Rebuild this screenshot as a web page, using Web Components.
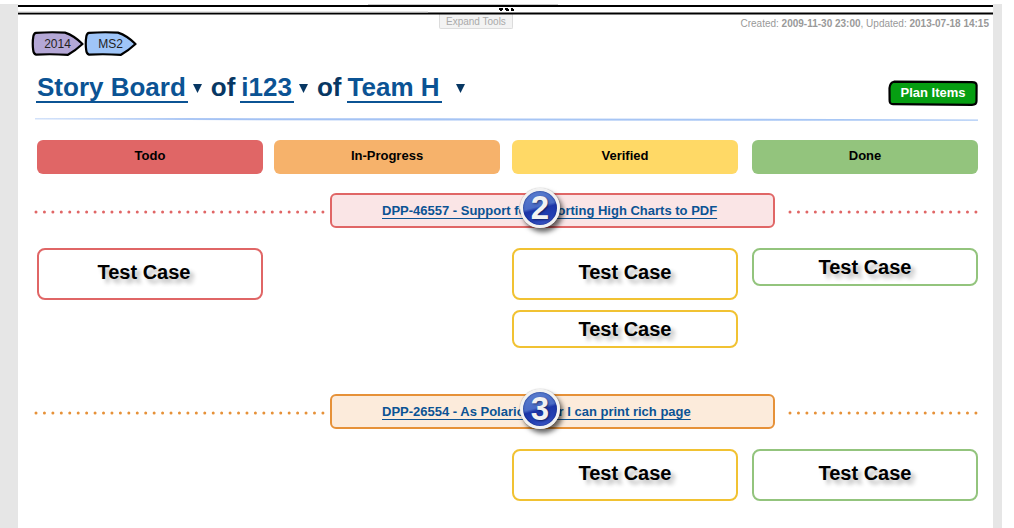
<!DOCTYPE html>
<html lang="en">
<head>
<meta charset="utf-8">
<title>Story Board</title>
<style>
  html, body { margin: 0; background: #fff; }
  body { font-family: "Liberation Sans", Arial, sans-serif; color: #000; }
</style>
</head>
<body>
<story-page>
  <top-rail slot="rail"></top-rail>
  <page-meta slot="rail" created="2009-11-30 23:00" updated="2013-07-18 14:15"></page-meta>
  <tag-chip slot="tags" style="--fill:#b4a7d6">2014</tag-chip>
  <tag-chip slot="tags" style="--fill:#9fc5f8">MS2</tag-chip>
  <board-title slot="title"></board-title>
  <plan-button slot="action">Plan Items</plan-button>
  <board-columns>
    <column-head style="--fill:#e06666">Todo</column-head>
    <column-head style="--fill:#f6b26b">In-Progress</column-head>
    <column-head style="--fill:#ffd966">Verified</column-head>
    <column-head style="--fill:#93c47d">Done</column-head>
  </board-columns>
  <story-lane step="2" label="DPP-46557 - Support for exporting High Charts to PDF" style="--line:#e06666;--tint:#fae5e6">
    <test-card slot="todo" tall>Test Case</test-card>
    <test-card slot="verified" tall>Test Case</test-card>
    <test-card slot="verified">Test Case</test-card>
    <test-card slot="done">Test Case</test-card>
  </story-lane>
  <story-lane step="3" label="DPP-26554 - As Polarion user I can print rich page" style="--line:#e69138;--tint:#fcebdb">
    <test-card slot="verified" tall>Test Case</test-card>
    <test-card slot="done" tall>Test Case</test-card>
  </story-lane>
</story-page>

<script>
const define = (name, markup, fill) => {
  const template = document.createElement('template');
  template.innerHTML = markup;
  customElements.define(name, class extends HTMLElement {
    constructor() {
      super();
      const root = this.attachShadow({ mode: 'open' });
      root.append(template.content.cloneNode(true));
      if (fill) fill(this, root);
    }
  });
};

define('story-page', `
<style>
  :host { display: block; padding: 4px 12px 0 0; --columns: 226fr 11fr 226fr 12fr 226fr 14fr 226fr; }
  .frame { box-sizing: border-box; min-height: calc(100vh - 4px); border: solid #e6e6e6; border-width: 0 9px 0 18px; }
  .tags { display: flex; padding: 0 0 0 13px; }
  .head { display: flex; justify-content: space-between; align-items: flex-start; padding: 16px 15px 0 18px; }
  .rule { display: block; width: calc(100% - 32px); height: 5px; margin: 11px 15px 0 17px; }
  main { display: flex; flex-direction: column; padding-top: 18px; }
  ::slotted(story-lane) { margin-bottom: 46px; }
  ::slotted(story-lane:last-child) { margin-bottom: 0; }
</style>
<div class="frame">
  <header>
    <slot name="rail"></slot>
    <div class="tags"><slot name="tags"></slot></div>
    <div class="head"><slot name="title"></slot><slot name="action"></slot></div>
    <svg class="rule" viewBox="0 0 942 5" preserveAspectRatio="none" aria-hidden="true">
      <defs><linearGradient id="g"><stop offset="0" stop-color="#d3e2fa"/><stop offset=".2" stop-color="#a4c2f4"/><stop offset="1" stop-color="#a9c8f5"/></linearGradient></defs>
      <path d="M0 1 L150 1.1 L400 1.3 L700 1.8 L942 2.4 L942 3.8 L700 3.8 L400 3.5 L150 3 L0 2.6Z" fill="url(#g)"/>
    </svg>
  </header>
  <main><slot></slot></main>
</div>`);

define('top-rail', `
<style>
  :host { display: block; position: relative; height: 11px; }
  .lines { display: block; width: 100%; height: 11px; }
  .grip { position: absolute; left: 50%; top: 4px; width: 17px; height: 4px; margin-left: -8px; }
</style>
<svg class="lines" viewBox="0 0 975 11" preserveAspectRatio="none" aria-hidden="true">
  <path d="M0 2h975M0 9.5h975" fill="none" stroke="#000" stroke-width="2"/>
  <path d="M0 8h410M350 .5h190" stroke="#ccc" stroke-width="1"/>
</svg>
<svg class="grip" viewBox="0 0 17 4" aria-hidden="true"><path d="M1 0h4v2h-1v1h-2v-1h-1zM7 0h3v1h1v2h-3v-1h-1zM13 0h2v1h1v2h-3z"/></svg>`);

define('page-meta', `
<style>
  :host { display: grid; grid-template-columns: 421fr 554fr; font-size: 10px; line-height: 14px; }
  .row { grid-column: 2; display: flex; justify-content: space-between; align-items: flex-start; margin-top: -1px; padding-right: 4px; }
  button { box-sizing: border-box; height: 15px; padding: 0 6px; border: 1px solid #dcdcdc; border-top: 0; border-radius: 0 0 2px 2px; background: #f3f3f3; color: #aaa; font: 10px/16px "Liberation Sans", Arial, sans-serif; }
  p { margin: 3px 0 0; color: #999; }
</style>
<div class="row">
  <button type="button">Expand Tools</button>
  <p>Created: <b id="c"></b>, Updated: <b id="u"></b></p>
</div>`, (host, root) => {
  root.getElementById('c').textContent = host.getAttribute('created');
  root.getElementById('u').textContent = host.getAttribute('updated');
});

define('tag-chip', `
<style>
  :host { display: block; position: relative; width: 53px; height: 26px; font-size: 12px; line-height: 26px; color: #222; text-align: center; }
  svg { position: absolute; inset: 0; width: 53px; height: 26px; }
  span { position: relative; }
</style>
<svg viewBox="0 0 53 26" aria-hidden="true"><path d="M5 1.8 Q20 .8 34 1.6 Q43 4.5 51.5 13 Q45 19 37 23.8 Q20 22.8 5 23.6 Q2.4 23 2.2 19 Q1.2 12 2.4 5 Q3 2 5 1.8Z" fill="var(--fill)" stroke="#000" stroke-width="2.2" stroke-linejoin="round"/></svg>
<span><slot></slot></span>`);

define('board-title', `
<style>
  :host { display: block; }
  h1 { display: flex; align-items: flex-start; margin: 0; font-size: 26px; line-height: 28px; font-weight: bold; color: #073763; white-space: pre; }
  a { padding: 0 2px 0 1px; border-bottom: 2px solid #0b5394; color: #0b5394; text-decoration: none; }
  span { margin: 0 5px 0 9px; }
  button { display: block; margin: 11px 0 0 5px; padding: 0; border: 0; background: none; }
  button.far { margin-left: 14px; }
  svg { display: block; width: 9px; height: 9px; }
</style>
<h1><a href="#board">Story Board</a><button type="button" aria-label="Choose page"><svg viewBox="0 0 9 9"><path d="M0 0h9L4.5 9z" fill="#073763"/></svg></button><span>of</span><a href="#iteration">i123</a><button type="button" aria-label="Choose iteration"><svg viewBox="0 0 9 9"><path d="M0 0h9L4.5 9z" fill="#073763"/></svg></button><span>of</span><a href="#team">Team H</a><button class="far" type="button" aria-label="Choose team"><svg viewBox="0 0 9 9"><path d="M0 0h9L4.5 9z" fill="#073763"/></svg></button></h1>`);

define('plan-button', `
<style>
  :host { display: block; margin-top: 7px; }
  button { position: relative; display: block; width: 90px; height: 26px; padding: 0; border: 0; background: none; color: #fff; font: bold 13px/24px "Liberation Sans", Arial, sans-serif; }
  svg { position: absolute; inset: 0; width: 90px; height: 26px; }
  span { position: relative; display: block; height: 26px; line-height: 25px; }
</style>
<button type="button"><svg viewBox="0 0 90 26" aria-hidden="true"><path d="M6 1.7 L84 2.2 Q88.5 2.2 88.6 5.4 L88.5 21 Q88.5 24.8 84 24.8 L5 24.2 Q1.4 24.2 1.6 20 L1.5 8 Q2 2.6 6 1.7Z" fill="#069e12" stroke="#000" stroke-width="2.2"/></svg><span><slot></slot></span></button>`);

define('board-columns', `
<style>
  :host { display: grid; grid-template-columns: var(--columns); padding: 0 15px 0 19px; margin-bottom: 19px; }
  ::slotted(:nth-child(1)) { grid-column: 1; }
  ::slotted(:nth-child(2)) { grid-column: 3; }
  ::slotted(:nth-child(3)) { grid-column: 5; }
  ::slotted(:nth-child(4)) { grid-column: 7; }
</style>
<slot></slot>`);

define('column-head', `
<style>
  :host { display: block; box-sizing: border-box; height: 34px; border-radius: 6px; background: var(--fill); font-size: 13px; line-height: 32px; font-weight: bold; text-align: center; }
</style>
<slot></slot>`);

define('story-lane', `
<style>
  :host { display: block; }
  .bar { display: grid; grid-template-columns: 287fr 467fr 186fr; align-items: center; padding: 0 17px 0 18px; }
  .dots { display: block; width: 100%; height: 4px; overflow: visible; }
  line { stroke: var(--line); stroke-width: 3px; stroke-linecap: round; stroke-dasharray: 0 1; }
  .story { position: relative; box-sizing: border-box; height: 35px; margin: 0 15px 0 7px; padding-left: 50px; border: 2px solid var(--line); border-radius: 6px; background: var(--tint); font-size: 13px; line-height: 31px; font-weight: bold; white-space: nowrap; }
  a { color: #0b5394; text-decoration: underline; text-decoration-thickness: 1px; text-underline-offset: 3px; text-decoration-skip-ink: none; }
  step-badge { position: absolute; left: 188px; top: -7px; }
  .cards { display: grid; grid-template-columns: var(--columns); padding: 20px 15px 0 19px; }
  .col { display: flex; flex-direction: column; gap: 10px; }
  .todo { grid-column: 1; --line: #e06666; --inset: 12px; }
  .doing { grid-column: 3; --line: #f6b26b; }
  .verified { grid-column: 5; --line: #f1c232; }
  .done { grid-column: 7; --line: #93c47d; }
</style>
<div class="bar">
  <svg class="dots" aria-hidden="true"><line x1="0" y1="3" x2="100%" y2="3" pathLength="34.01"/></svg>
  <div class="story"><a href="#story"></a><step-badge></step-badge></div>
  <svg class="dots" aria-hidden="true"><line x1="0" y1="3" x2="100%" y2="3" pathLength="22.01"/></svg>
</div>
<div class="cards">
  <div class="col todo"><slot name="todo"></slot></div>
  <div class="col doing"><slot name="doing"></slot></div>
  <div class="col verified"><slot name="verified"></slot></div>
  <div class="col done"><slot name="done"></slot></div>
</div>`, (host, root) => {
  root.querySelector('a').textContent = host.getAttribute('label');
  root.querySelector('step-badge').textContent = host.getAttribute('step');
});

define('step-badge', `
<style>
  :host { display: block; box-sizing: border-box; width: 40px; height: 40px; border: 3px solid #f2f2f2; border-radius: 50%; background: linear-gradient(165deg, #5b7fd0 0, #4a6cc6 45%, #1c36a8 52%, #2340b4 75%, #4a63cf 100%); box-shadow: 3px 4px 5px rgba(0,0,0,.6), 0 0 1px #777, inset 0 0 2px #0a1f70; color: #f2f2f2; font-size: 33px; line-height: 34px; font-weight: bold; text-align: center; text-shadow: 1px 1px 2px rgba(0,0,30,.5); }
</style>
<slot></slot>`);

define('test-card', `
<style>
  :host { display: block; box-sizing: border-box; height: 38px; padding-right: var(--inset, 0); border: 2px solid var(--line); border-radius: 8px; background: #fff; font-size: 20px; line-height: 34px; font-weight: bold; text-align: center; text-shadow: 4px 4px 4px rgba(0,0,0,.3); }
  :host([tall]) { height: 52px; line-height: 44px; }
</style>
<slot></slot>`);
</script>
</body>
</html>
